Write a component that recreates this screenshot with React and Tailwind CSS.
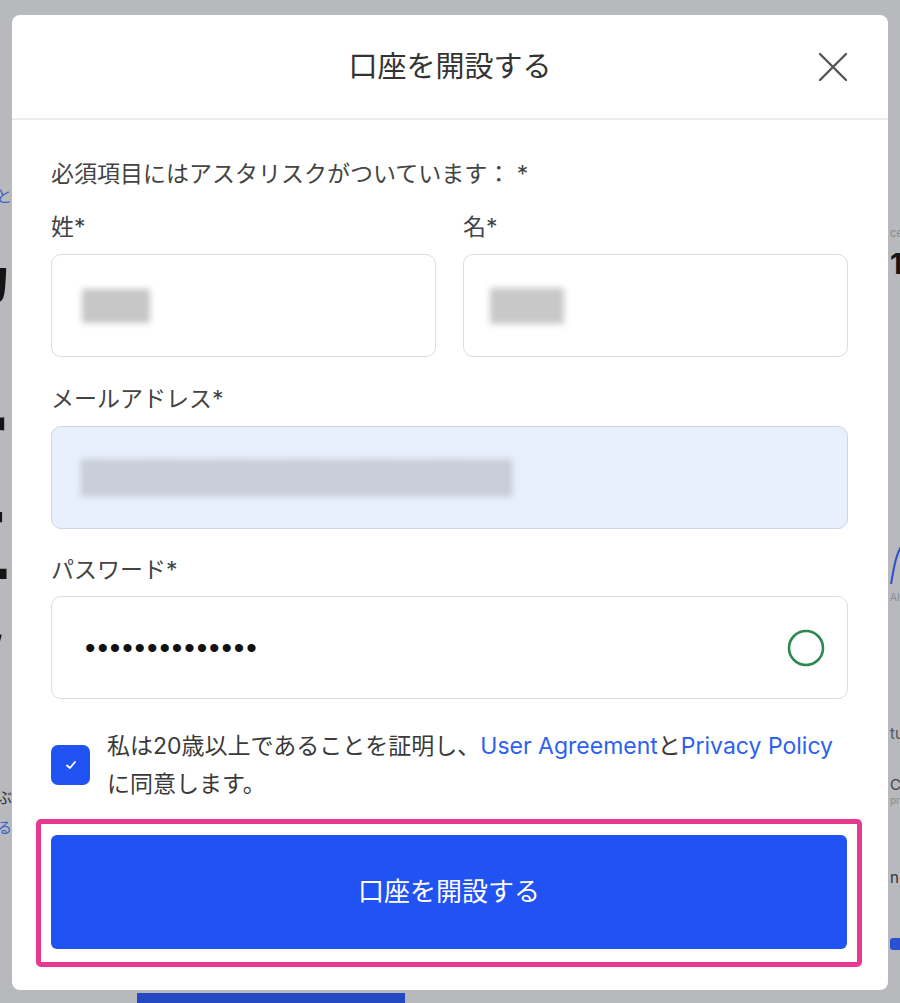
export default function App() {
  return (
    <div className="relative h-[1003px] w-full overflow-hidden bg-[#b8b9bd] font-['Inter','Noto_Sans_CJK_JP',sans-serif]">
      {/* background page (dimmed, mostly hidden by the dialog) */}
      <div className="flex h-full">
        <div className="flex w-[12px] shrink-0 flex-col items-end overflow-hidden">
          <div className="mt-[186px] whitespace-nowrap text-[16px] leading-[20px] text-[#3a62c9]">確認をと</div>
          <div className="mt-[40px] flex flex-col items-end text-[84px] font-bold leading-[120px] text-[#151515]">
            <span>留</span>
            <span>ー</span>
            <span>三</span>
            <span>ソ</span>
          </div>
          <div className="mt-[62px] whitespace-nowrap text-[15px] leading-[20px] text-[#333]">取引所を選ぶ</div>
          <div className="mt-[10px] whitespace-nowrap text-[15px] leading-[20px] text-[#3a62c9]">詳しく見る</div>
        </div>
        <div className="flex flex-1 flex-col">
          <div className="mt-auto ml-[125px] h-[10px] w-[268px] bg-[#2348c2]" />
        </div>
        <div className="flex w-[12px] shrink-0 flex-col items-start overflow-hidden pl-[2px]">
          <div className="mt-[226px] whitespace-nowrap text-[11px] leading-[14px] text-[#8a8a8e]">ce</div>
          <div className="mt-[8px] whitespace-nowrap text-[28px] font-bold leading-[32px] text-[#161616]">1</div>
          <svg width="14" height="50" viewBox="0 0 14 50" className="mt-[258px] shrink-0">
            <path d="M1 46 C4 30 6 14 13 6" fill="none" stroke="#2a4fd0" strokeWidth="2" />
          </svg>
          <div className="mt-[2px] whitespace-nowrap text-[10px] leading-[14px] text-[#8a8a8e]">All</div>
          <div className="mt-[120px] whitespace-nowrap text-[15px] leading-[20px] text-[#555]">tu</div>
          <div className="mt-[32px] whitespace-nowrap text-[15px] leading-[18px] text-[#444]">Co</div>
          <div className="whitespace-nowrap text-[10px] leading-[12px] text-[#8a8a8e]">pr</div>
          <div className="mt-[62px] whitespace-nowrap text-[15px] leading-[20px] text-[#333]">n</div>
          <div className="mt-[50px] h-[12px] w-[14px] rounded-[3px] bg-[#2a4fd0]" />
        </div>
      </div>

      {/* dialog */}
      <div className="absolute left-[12px] top-[15px] flex h-[975px] w-[876px] flex-col rounded-[8px] bg-white">
        <div className="grid h-[105px] grid-cols-[1fr_auto_1fr] items-center border-b-2 border-[#ececec]">
          <div />
          <div className="text-[29px] leading-[38px] text-[#333]">口座を開設する</div>
          <div className="flex justify-end pr-[40px]">
            <svg width="30" height="30" viewBox="0 0 30 30">
              <path d="M2 2 L28 28 M28 2 L2 28" stroke="#555" strokeWidth="2.4" strokeLinecap="round" />
            </svg>
          </div>
        </div>

        <div className="flex flex-col pl-[39px] pr-[40px] pt-[39px]">
          <div className="text-[23px] leading-[30px] text-[#444]">必須項目にはアスタリスクがついています： *</div>

          <div className="mt-[23px] grid grid-cols-2 gap-x-[27px]">
            <div className="flex flex-col">
              <div className="text-[23px] leading-[30px] text-[#444]">姓*</div>
              <div className="mt-[12px] flex h-[103px] items-center rounded-[10px] border-[1.5px] border-[#dcdcdc] bg-white pl-[30px]">
                <div className="h-[34px] w-[68px] bg-[#c6c6c6] blur-[3px]" />
              </div>
            </div>
            <div className="flex flex-col">
              <div className="text-[23px] leading-[30px] text-[#444]">名*</div>
              <div className="mt-[12px] flex h-[103px] items-center rounded-[10px] border-[1.5px] border-[#dcdcdc] bg-white pl-[26px]">
                <div className="h-[36px] w-[74px] bg-[#c8c8c8] blur-[3px]" />
              </div>
            </div>
          </div>

          <div className="mt-[27px] text-[23px] leading-[30px] text-[#444]">メールアドレス*</div>
          <div className="mt-[12px] flex h-[103px] items-center rounded-[10px] border-[1.5px] border-[#cdd6e6] bg-[#e8f0fe] pl-[29px]">
            <div className="h-[38px] w-[432px] bg-[repeating-linear-gradient(90deg,#c3c8d2_0px,#c3c8d2_5px,#cfd4de_5px,#cfd4de_9px)] blur-[3px]" />
          </div>

          <div className="mt-[26px] text-[23px] leading-[30px] text-[#444]">パスワード*</div>
          <div className="mt-[11px] flex h-[103px] items-center justify-between rounded-[10px] border-[1.5px] border-[#dcdcdc] bg-white pl-[33px] pr-[21px]">
            <div className="font-['Liberation_Sans',sans-serif] text-[30px] leading-[30px] tracking-[1.9px] text-[#111]">••••••••••••••</div>
            <svg width="40" height="40" viewBox="0 0 40 40">
              <circle cx="20" cy="20" r="17" fill="none" stroke="#2b8a4f" strokeWidth="2.6" />
            </svg>
          </div>

          <div className="mt-[28px] flex items-center gap-[17px]">
            <div className="flex h-[40px] w-[39px] shrink-0 items-center justify-center rounded-[7px] bg-[#2152f3]">
              <svg width="14" height="14" viewBox="0 0 14 14">
                <path d="M3 7.5 L6 10 L11 4" fill="none" stroke="#fff" strokeWidth="1.8" strokeLinecap="round" strokeLinejoin="round" />
              </svg>
            </div>
            <div className="text-[23px] leading-[38px] text-[#3a3a3a]">
              私は20歳以上であることを証明し、<span className="text-[#2c62ee]">User Agreement</span>と<span className="text-[#2c62ee]">Privacy Policy</span>
              <br />
              に同意します。
            </div>
          </div>

          <div className="-ml-[15px] -mr-[14px] mt-[16px] rounded-[5px] border-[5px] border-[#e8398e] px-[10px] pb-[13px] pt-[11px]">
            <div className="flex h-[114px] w-full items-center justify-center rounded-[6px] bg-[#2152f3] text-[26px] leading-[34px] text-white">
              口座を開設する
            </div>
          </div>
        </div>
      </div>
    </div>
  );
}
